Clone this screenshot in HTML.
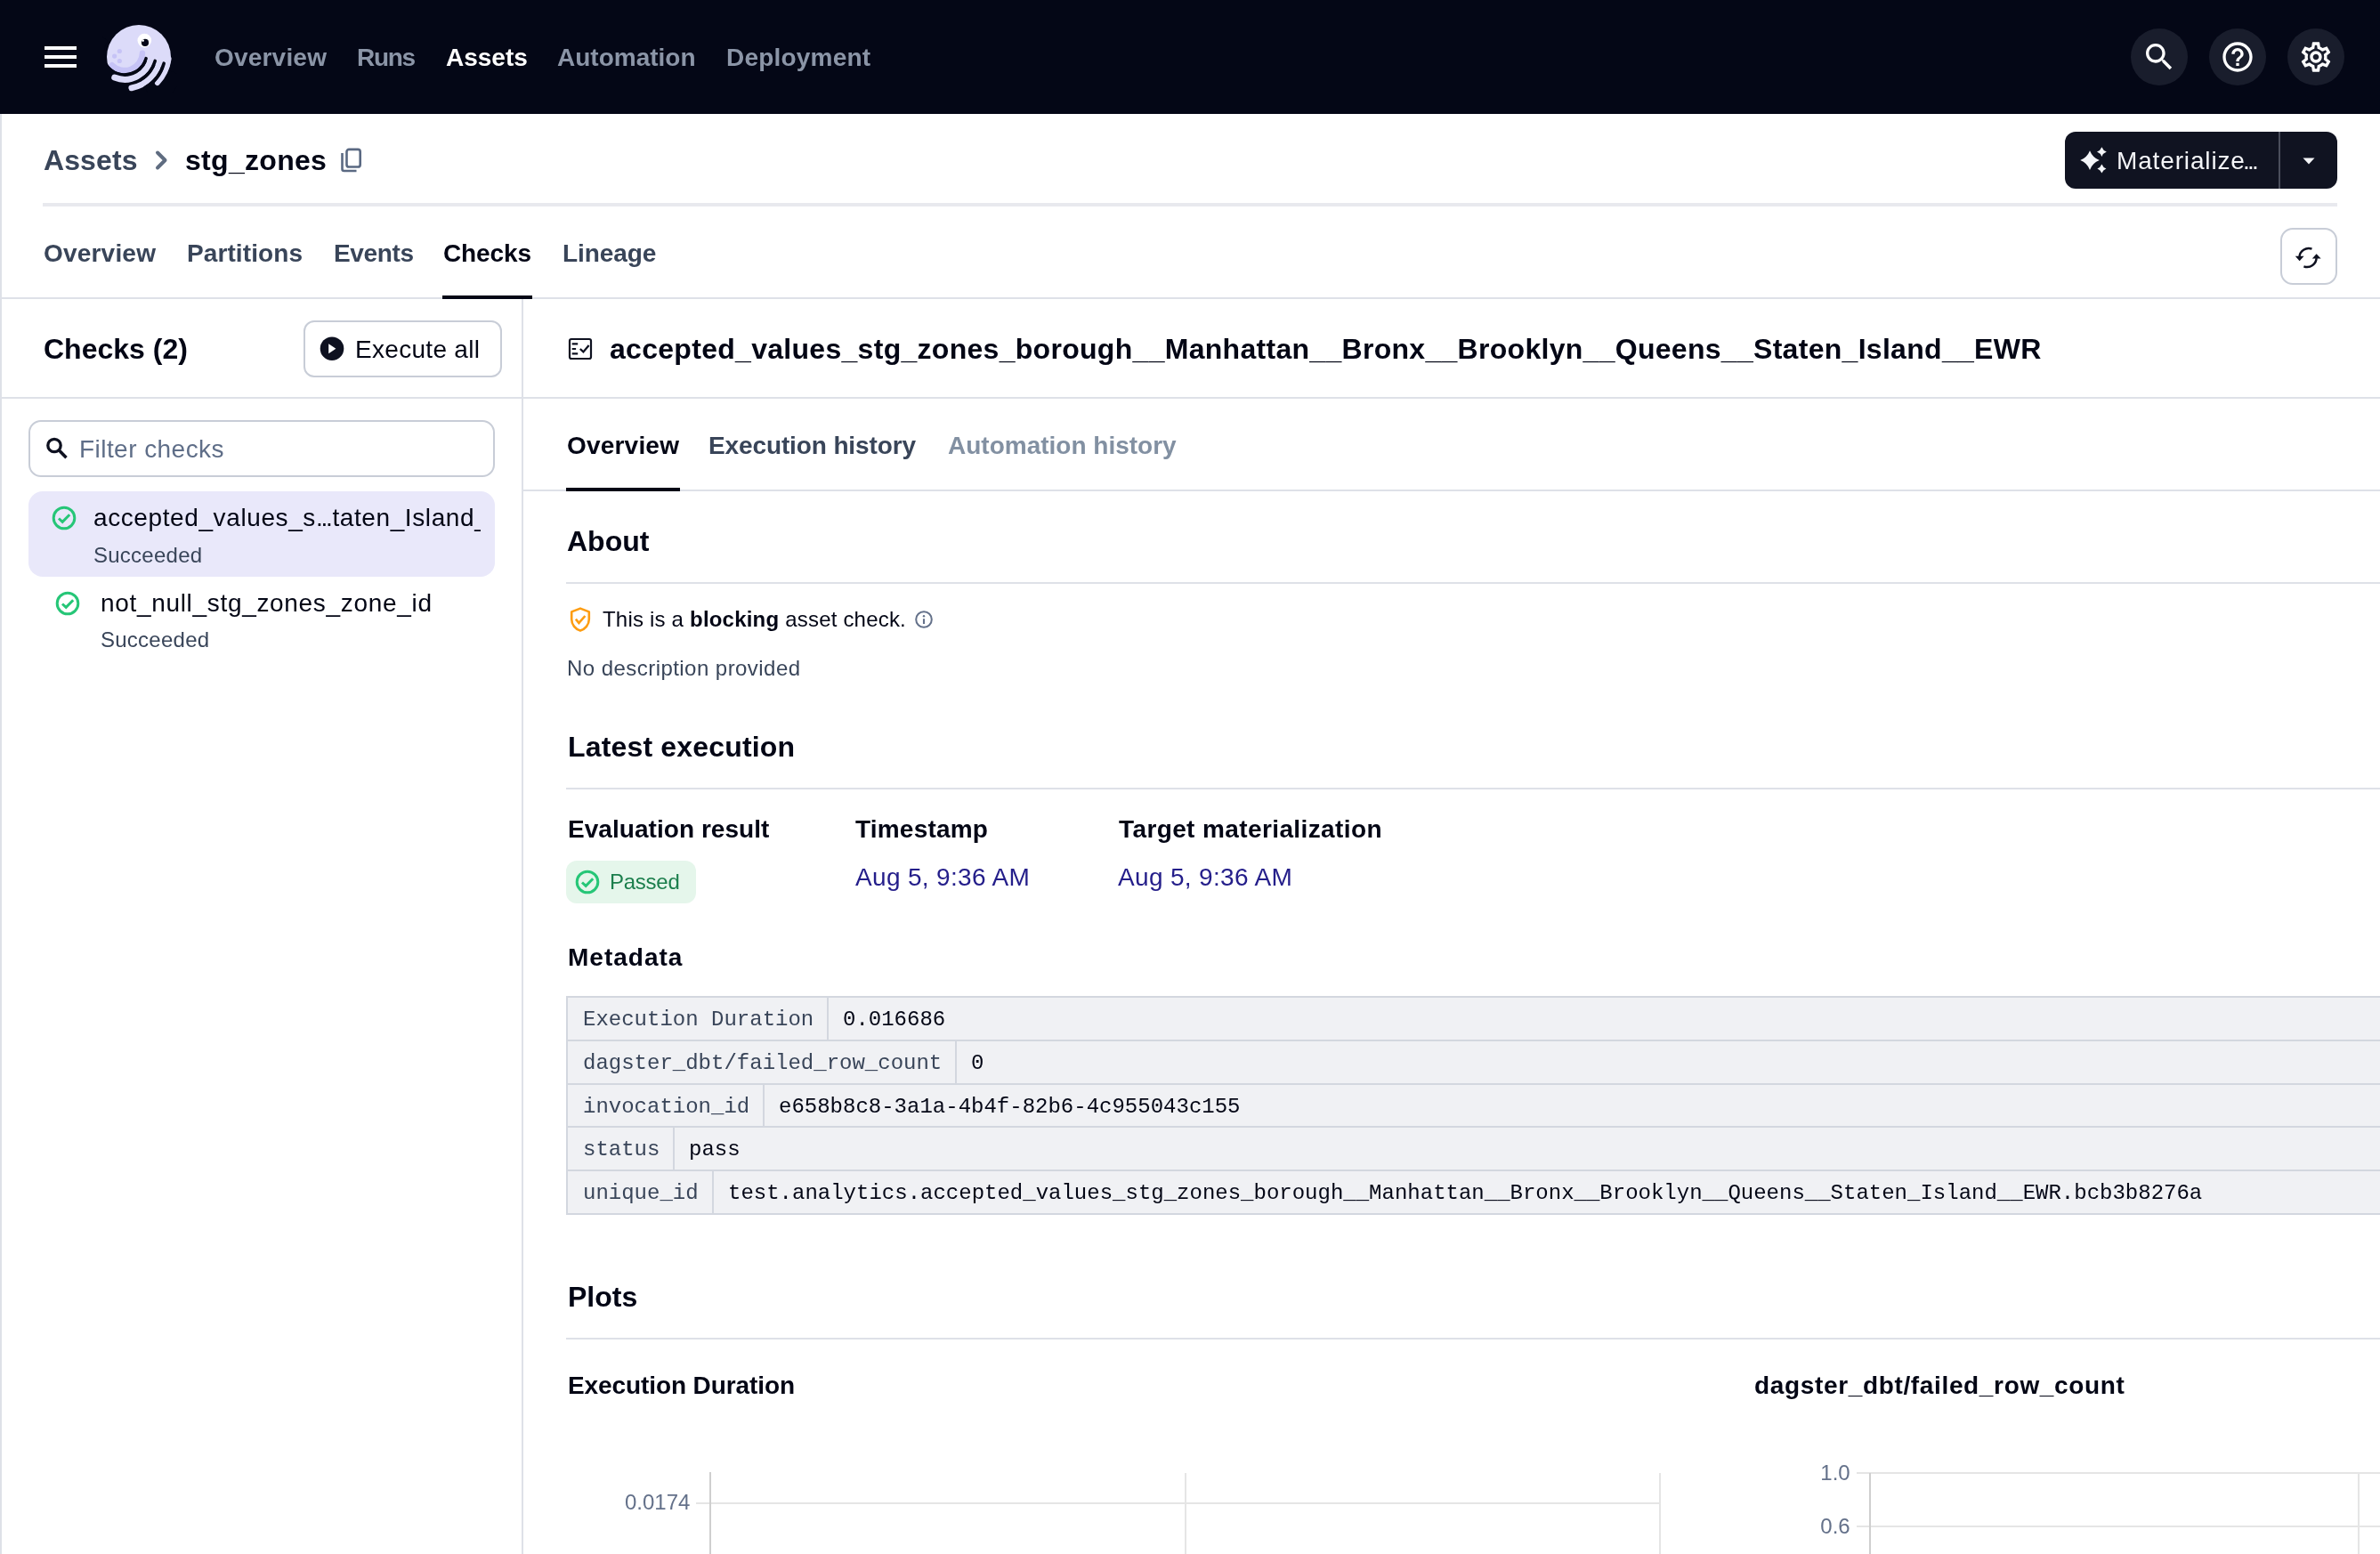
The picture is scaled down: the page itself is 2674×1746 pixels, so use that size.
<!DOCTYPE html>
<html><head><meta charset="utf-8"><title>stg_zones checks</title>
<style>
html,body{margin:0;padding:0;background:#FFFFFF;}
body{width:2674px;height:1746px;position:relative;overflow:hidden;font-family:"Liberation Sans",sans-serif;}
.t{position:absolute;white-space:pre;line-height:1;will-change:transform;}
.r{position:absolute;}
@media (max-width:2000px){html{zoom:0.5;}}
</style></head><body>
<div class="r" style="left:0px;top:0px;width:2674px;height:128px;background:#040716;"></div>
<div class="r" style="left:50px;top:52px;width:36px;height:4px;background:#FFFFFF;"></div>
<div class="r" style="left:50px;top:62px;width:36px;height:4px;background:#FFFFFF;"></div>
<div class="r" style="left:50px;top:72px;width:36px;height:4px;background:#FFFFFF;"></div>
<svg class="r" style="left:115px;top:24px;" width="84" height="80" viewBox="0 0 84 80"><circle cx="41" cy="40" r="36" fill="#DCDBF9"/>
<path d="M46.51 43.69 A23.2 23.2 0 1 1 6.00 21.69 L-32.34 -5.15 A70 70 0 1 0 89.90 61.22 Z" fill="#040716"/>
<path d="M44.99 35.70 A20.0 20.0 0 0 1 10.86 49.14" stroke="#C6C3F6" stroke-width="6.4" fill="none" stroke-linecap="round"/>
<path d="M36.60 55.09 A23.2 23.2 0 0 1 6.00 21.69 L-32.34 -5.15 A70 70 0 0 0 60.00 95.62 Z" fill="#040716"/>
<path d="M54.96 39.21 A30.25 30.25 0 0 1 13.67 63.05" stroke="#DCDBF9" stroke-width="6.9" fill="none" stroke-linecap="round"/>
<path d="M65.25 40.66 A40.65 40.65 0 0 1 32.76 74.90" stroke="#DCDBF9" stroke-width="6.7" fill="none" stroke-linecap="round"/>
<path d="M74.81 42.00 A50.3 50.3 0 0 1 61.79 69.30" stroke="#DCDBF9" stroke-width="5.6" fill="none" stroke-linecap="round"/>
<path d="M49.10 41.64 A25.0 25.0 0 0 1 37.50 56.65" stroke="#040716" stroke-width="3.6" fill="none" stroke-linecap="round"/>
<path d="M59.23 44.43 A35.5 35.5 0 0 1 42.75 65.74" stroke="#040716" stroke-width="3.6" fill="none" stroke-linecap="round"/>
<path d="M69.16 47.16 A45.8 45.8 0 0 1 47.90 74.66" stroke="#040716" stroke-width="3.6" fill="none" stroke-linecap="round"/>
<circle cx="47.3" cy="21.6" r="7.8" fill="#FFFFFF"/>
<circle cx="48" cy="23.9" r="4.1" fill="#040716"/><circle cx="45.6" cy="21.6" r="1.3" fill="#FFFFFF"/>
<circle cx="19.3" cy="33.5" r="2.6" fill="#C6C3F6"/>
<circle cx="13.6" cy="39.1" r="2.6" fill="#C6C3F6"/>
<circle cx="19.3" cy="44.5" r="2.6" fill="#C6C3F6"/>
</svg>
<div class="t" style="left:241px;top:51.30px;font-size:28px;font-weight:700;color:#8B95A7;font-family:'Liberation Sans', sans-serif;letter-spacing:0.2px;">Overview</div>
<div class="t" style="left:401px;top:51.30px;font-size:28px;font-weight:700;color:#8B95A7;font-family:'Liberation Sans', sans-serif;letter-spacing:-1.3px;">Runs</div>
<div class="t" style="left:501px;top:51.30px;font-size:28px;font-weight:700;color:#FFFFFF;font-family:'Liberation Sans', sans-serif;">Assets</div>
<div class="t" style="left:626px;top:51.30px;font-size:28px;font-weight:700;color:#8B95A7;font-family:'Liberation Sans', sans-serif;">Automation</div>
<div class="t" style="left:816px;top:51.30px;font-size:28px;font-weight:700;color:#8B95A7;font-family:'Liberation Sans', sans-serif;letter-spacing:0.2px;">Deployment</div>
<div class="r" style="left:2394px;top:32px;width:64px;height:64px;border-radius:50%;background:#191D2C"></div>
<div class="r" style="left:2482px;top:32px;width:64px;height:64px;border-radius:50%;background:#191D2C"></div>
<div class="r" style="left:2570px;top:32px;width:64px;height:64px;border-radius:50%;background:#191D2C"></div>
<svg class="r" style="left:2406px;top:43.7px;" width="40" height="40" viewBox="0 0 24 24"><path d="M15.5 14h-.79l-.28-.27C15.41 12.59 16 11.11 16 9.5 16 5.91 13.09 3 9.5 3S3 5.91 3 9.5 5.91 16 9.5 16c1.61 0 3.09-.59 4.23-1.57l.27.28v.79l5 4.99L20.49 19l-4.99-5zm-6 0C7.01 14 5 11.99 5 9.5S7.01 5 9.5 5 14 7.01 14 9.5 11.99 14 9.5 14z" fill="#FFFFFF"/></svg>
<svg class="r" style="left:2494px;top:44px;" width="40" height="40" viewBox="0 0 24 24"><path d="M11 18h2v-2h-2v2zm1-16C6.48 2 2 6.480 2 12s4.48 10 10 10 10-4.48 10-10S17.52 2 12 2zm0 18c-4.41 0-8-3.59-8-8s3.59-8 8-8 8 3.59 8 8-3.59 8-8 8zm0-14c-2.21 0-4 1.79-4 4h2c0-1.1.9-2 2-2s2 .9 2 2c0 2-3 1.75-3 5h2c0-2.25 3-2.5 3-5 0-2.21-1.790-4-4-4z" fill="#FFFFFF"/></svg>
<svg class="r" style="left:2582px;top:44px;" width="40" height="40" viewBox="0 0 24 24"><path d="M19.43 12.98c.04-.32.07-.64.07-.98 0-.34-.03-.66-.07-.98l2.11-1.65c.19-.15.24-.42.12-.64l-2-3.46c-.09-.16-.26-.25-.44-.25-.06 0-.12.01-.17.03l-2.49 1c-.52-.4-1.08-.73-1.69-.98l-.38-2.65C14.46 2.18 14.25 2 14 2h-4c-.25 0-.46.18-.49.42l-.38 2.65c-.61.25-1.17.59-1.69.98l-2.49-1c-.06-.02-.12-.03-.18-.03-.17 0-.34.09-.43.25l-2 3.46c-.13.22-.07.49.12.64l2.11 1.650c-.04.32-.07.65-.07.98 0 .33.03.66.07.98l-2.11 1.65c-.19.15-.24.42-.12.64l2 3.46c.09.16.26.25.44.25.06 0 .12-.01.17-.03l2.49-1c.52.4 1.08.73 1.69.98l.38 2.65c.03.24.24.42.49.42h4c.25 0 .46-.18.49-.42l.38-2.65c.61-.25 1.17-.59 1.69-.98l2.49 1c.06.02.12.03.18.03.17 0 .34-.09.43-.25l2-3.46c.12-.22.07-.49-.12-.64l-2.11-1.65zm-1.98-1.71c.04.31.05.52.05.73 0 .21-.02.43-.05.73l-.14 1.13.89.7 1.08.84-.7 1.21-1.27-.51-1.04-.42-.9.68c-.43.32-.84.56-1.25.73l-1.06.43-.16 1.13-.2 1.35h-1.4l-.19-1.35-.16-1.13-1.06-.43c-.43-.18-.83-.41-1.23-.71l-.91-.7-1.06.43-1.27.51-.7-1.21 1.08-.84.89-.7-.14-1.13c-.03-.31-.05-.54-.05-.74s.02-.43.05-.73l.14-1.13-.89-.7-1.08-.84.7-1.21 1.27.51 1.04.42.9-.68c.43-.32.84-.56 1.25-.73l1.06-.43.16-1.13.2-1.35h1.39l.19 1.35.16 1.13 1.06.43c.43.18.83.41 1.23.71l.91.7 1.06-.43 1.27-.51.7 1.21-1.07.85-.89.7.14 1.13zM12 8c-2.21 0-4 1.79-4 4s1.79 4 4 4 4-1.79 4-4-1.79-4-4-4zm0 6c-1.1 0-2-.9-2-2s.9-2 2-2 2 .9 2 2-.9 2-2 2z" fill="#FFFFFF"/></svg>
<div class="r" style="left:0px;top:128px;width:2px;height:1618px;background:#DEE1E8;"></div>
<div class="t" style="left:49px;top:163.91px;font-size:32px;font-weight:700;color:#394559;font-family:'Liberation Sans', sans-serif;letter-spacing:0.1px;">Assets</div>
<svg class="r" style="left:170px;top:166px;" width="22" height="28" viewBox="0 0 22 28"><path d="M7 5.5 L15.5 14 L7 22.5" stroke="#5F6C80" stroke-width="4" fill="none" stroke-linecap="round" stroke-linejoin="round"/></svg>
<div class="t" style="left:208px;top:163.91px;font-size:32px;font-weight:700;color:#030615;font-family:'Liberation Sans', sans-serif;letter-spacing:0.3px;">stg_zones</div>
<svg class="r" style="left:380px;top:163px;" width="30" height="34" viewBox="0 0 30 34"><rect x="9.5" y="4.9" width="15.2" height="19.6" rx="2.6" stroke="#5A6982" stroke-width="2.6" fill="none"/><path d="M4.5 9 V27 a2 2 0 0 0 2 2 H20.5" stroke="#5A6982" stroke-width="2.6" fill="none"/></svg>
<div class="r" style="left:48px;top:228px;width:2578px;height:4px;background:#E8E9EE;"></div>
<div class="r" style="left:2320px;top:148px;width:306px;height:64px;border-radius:12px;background:#101321"></div>
<div class="r" style="left:2560px;top:148px;width:2px;height:64px;background:#4A4E5C;"></div>
<svg class="r" style="left:2330px;top:160px;" width="50" height="40" viewBox="0 0 50 40"><path d="M18 9.3 Q21.024 17.076 28.8 20.1 Q21.024 23.124000000000002 18 30.900000000000002 Q14.975999999999999 23.124000000000002 7.199999999999999 20.1 Q14.975999999999999 17.076 18 9.3Z" fill="#F4F5F8"/><path d="M31.4 5.199999999999999 Q32.912 9.088 36.8 10.6 Q32.912 12.112 31.4 16.0 Q29.887999999999998 12.112 26.0 10.6 Q29.887999999999998 9.088 31.4 5.199999999999999Z" fill="#F4F5F8"/><path d="M31.4 24.4 Q32.8 28.0 36.4 29.4 Q32.8 30.799999999999997 31.4 34.4 Q30.0 30.799999999999997 26.4 29.4 Q30.0 28.0 31.4 24.4Z" fill="#F4F5F8"/></svg>
<div class="t" style="left:2378px;top:166.80px;font-size:28px;font-weight:400;color:#F4F5F8;font-family:'Liberation Sans', sans-serif;letter-spacing:0.85px;">Materializ<span style="letter-spacing:-1.8px">e</span><span style="letter-spacing:-2.8px">..</span>.</div>
<svg class="r" style="left:2584px;top:174px;" width="20" height="12" viewBox="0 0 20 12"><path d="M3.5 3.5 H16.5 L10 10.5 Z" fill="#F4F5F8"/></svg>
<div class="t" style="left:49px;top:270.80px;font-size:28px;font-weight:700;color:#394559;font-family:'Liberation Sans', sans-serif;letter-spacing:0.2px;">Overview</div>
<div class="t" style="left:209.5px;top:270.80px;font-size:28px;font-weight:700;color:#394559;font-family:'Liberation Sans', sans-serif;letter-spacing:0.1px;">Partitions</div>
<div class="t" style="left:374.5px;top:270.80px;font-size:28px;font-weight:700;color:#394559;font-family:'Liberation Sans', sans-serif;letter-spacing:-0.35px;">Events</div>
<div class="t" style="left:498px;top:270.80px;font-size:28px;font-weight:700;color:#030615;font-family:'Liberation Sans', sans-serif;letter-spacing:-0.1px;">Checks</div>
<div class="t" style="left:631.5px;top:270.80px;font-size:28px;font-weight:700;color:#394559;font-family:'Liberation Sans', sans-serif;letter-spacing:-0.1px;">Lineage</div>
<div class="r" style="left:2px;top:334px;width:2672px;height:2px;background:#DEE1E8;"></div>
<div class="r" style="left:497px;top:332px;width:101px;height:4px;background:#030615;"></div>
<div class="r" style="left:2562px;top:256px;width:60px;height:60px;border:2px solid #C8CDD7;border-radius:14px;"></div>
<svg class="r" style="left:2577px;top:273px;" width="40" height="32" viewBox="0 0 40 32"><path d="M20.5 6.7 A 10.5 10.5 0 0 0 6.4 16" stroke="#0E1120" stroke-width="2.4" fill="none"/><path d="M1.8 14.8 H11.6 L6.6 20.2 Z" fill="#0E1120"/><path d="M11.4 26.3 A 10.5 10.5 0 0 0 25.6 16" stroke="#0E1120" stroke-width="2.4" fill="none"/><path d="M20.8 17.6 H30.6 L25.6 12.2 Z" fill="#0E1120"/></svg>
<div class="r" style="left:586px;top:336px;width:2px;height:1410px;background:#DEE1E8;"></div>
<div class="r" style="left:2px;top:446px;width:2672px;height:2px;background:#DEE1E8;"></div>
<div class="t" style="left:49px;top:375.91px;font-size:32px;font-weight:700;color:#030615;font-family:'Liberation Sans', sans-serif;">Checks (2)</div>
<div class="r" style="left:341px;top:360px;width:219px;height:60px;border:2px solid #C8CDD7;border-radius:12px;"></div>
<svg class="r" style="left:356px;top:375px;" width="34" height="34" viewBox="0 0 34 34"><circle cx="17" cy="16.7" r="13.3" fill="#0E1120"/><path d="M13.2 11.2 L21.4 16.7 L13.2 22.2Z" fill="#fff"/></svg>
<div class="t" style="left:398.6px;top:378.50px;font-size:28px;font-weight:400;color:#030615;font-family:'Liberation Sans', sans-serif;letter-spacing:0.3px;">Execute all</div>
<div class="r" style="left:32px;top:472px;width:520px;height:60px;border:2px solid #C8CDD7;border-radius:14px;"></div>
<svg class="r" style="left:46px;top:486px;" width="34" height="34" viewBox="0 0 34 34"><circle cx="15" cy="14.5" r="7.2" stroke="#0E1120" stroke-width="3.3" fill="none"/><path d="M20.2 19.8 L28.5 28.2" stroke="#0E1120" stroke-width="3.6"/></svg>
<div class="t" style="left:88.5px;top:490.50px;font-size:28px;font-weight:400;color:#5F6E88;font-family:'Liberation Sans', sans-serif;letter-spacing:0.45px;">Filter checks</div>
<div class="r" style="left:32px;top:552px;width:524px;height:96px;border-radius:16px;background:#E9E8FA"></div>
<svg class="r" style="left:56px;top:566px;" width="32" height="32" viewBox="0 0 32 32"><circle cx="16" cy="16" r="11.8" stroke="#26C677" stroke-width="3" fill="none"/><path d="M10 16.5 L14.2 20.3 L22.2 12.2" stroke="#26C677" stroke-width="3" fill="none"/></svg>
<div class="r" style="left:105px;top:560px;width:435px;height:48px;overflow:hidden;">
<div class="t" style="left:0px;top:8.30px;font-size:28px;font-weight:400;color:#030615;font-family:'Liberation Sans', sans-serif;letter-spacing:0.6px;">accepted_values_s<span style="letter-spacing:-2.3px">..</span><span style="letter-spacing:-0.3px">.</span>taten_Island__EWR</div>
</div>
<div class="t" style="left:105.2px;top:611.58px;font-size:24px;font-weight:400;color:#394559;font-family:'Liberation Sans', sans-serif;letter-spacing:0.25px;">Succeeded</div>
<svg class="r" style="left:60px;top:662px;" width="32" height="32" viewBox="0 0 32 32"><circle cx="16" cy="16" r="11.8" stroke="#26C677" stroke-width="3" fill="none"/><path d="M10 16.5 L14.2 20.3 L22.2 12.2" stroke="#26C677" stroke-width="3" fill="none"/></svg>
<div class="t" style="left:113.3px;top:664.30px;font-size:28px;font-weight:400;color:#030615;font-family:'Liberation Sans', sans-serif;letter-spacing:0.68px;">not_null_stg_zones_zone_id</div>
<div class="t" style="left:113.3px;top:707.38px;font-size:24px;font-weight:400;color:#394559;font-family:'Liberation Sans', sans-serif;letter-spacing:0.25px;">Succeeded</div>
<svg class="r" style="left:636px;top:376px;" width="32" height="32" viewBox="0 0 32 32"><rect x="4.0" y="5.0" width="24" height="22" rx="2" stroke="#0E1120" stroke-width="2.2" fill="none"/><path d="M6.7 10.4 H13.2 M6.7 16 H11.1 M6.7 21.4 H13.2" stroke="#0E1120" stroke-width="2.2"/><path d="M15.8 16 L19.4 19.4 L25.6 12" stroke="#0E1120" stroke-width="2.3" fill="none"/></svg>
<div class="t" style="left:685px;top:375.81px;font-size:32px;font-weight:700;color:#030615;font-family:'Liberation Sans', sans-serif;letter-spacing:0.29px;">accepted_values_stg_zones_borough__Manhattan__Bronx__Brooklyn__Queens__Staten_Island__EWR</div>
<div class="t" style="left:637px;top:486.60px;font-size:28px;font-weight:700;color:#030615;font-family:'Liberation Sans', sans-serif;letter-spacing:0.2px;">Overview</div>
<div class="t" style="left:795.9px;top:486.60px;font-size:28px;font-weight:700;color:#394559;font-family:'Liberation Sans', sans-serif;letter-spacing:-0.12px;">Execution history</div>
<div class="t" style="left:1065px;top:486.60px;font-size:28px;font-weight:700;color:#8290A2;font-family:'Liberation Sans', sans-serif;">Automation history</div>
<div class="r" style="left:588px;top:550px;width:2086px;height:2px;background:#DEE1E8;"></div>
<div class="r" style="left:636px;top:548px;width:128px;height:4px;background:#030615;"></div>
<div class="t" style="left:637px;top:591.91px;font-size:32px;font-weight:700;color:#030615;font-family:'Liberation Sans', sans-serif;">About</div>
<div class="r" style="left:636px;top:654px;width:2038px;height:2px;background:#DEE1E8;"></div>
<svg class="r" style="left:636px;top:680px;" width="32" height="32" viewBox="0 0 32 32"><path d="M16 3.6 L25.8 7.4 V15.8 C25.8 22 21.5 26.8 16 28.6 C10.5 26.8 6.2 22 6.2 15.8 V7.4 Z" stroke="#FD9D12" stroke-width="2.6" fill="none" stroke-linejoin="round"/><path d="M10.9 15.6 L14.4 19.9 L21.4 12" stroke="#FD9D12" stroke-width="2.6" fill="none"/></svg>
<div class="t" style="left:676.7px;top:684.28px;font-size:24px;color:#030615;letter-spacing:0.2px">This is a <b>blocking</b> asset check.</div>
<svg class="r" style="left:1026px;top:684px;" width="24" height="24" viewBox="0 0 24 24"><circle cx="12" cy="12" r="8.8" stroke="#64718A" stroke-width="2" fill="none"/><path d="M12 11.2 V17" stroke="#64718A" stroke-width="2.1"/><circle cx="12" cy="8.3" r="1.2" fill="#64718A"/></svg>
<div class="t" style="left:637.4px;top:738.58px;font-size:24px;font-weight:400;color:#394559;font-family:'Liberation Sans', sans-serif;letter-spacing:0.45px;">No description provided</div>
<div class="t" style="left:638px;top:822.91px;font-size:32px;font-weight:700;color:#030615;font-family:'Liberation Sans', sans-serif;letter-spacing:0.17px;">Latest execution</div>
<div class="r" style="left:636px;top:885px;width:2038px;height:2px;background:#DEE1E8;"></div>
<div class="t" style="left:637.6px;top:917.80px;font-size:28px;font-weight:700;color:#030615;font-family:'Liberation Sans', sans-serif;letter-spacing:0.05px;">Evaluation result</div>
<div class="t" style="left:961px;top:917.80px;font-size:28px;font-weight:700;color:#030615;font-family:'Liberation Sans', sans-serif;letter-spacing:0.2px;">Timestamp</div>
<div class="t" style="left:1256.5px;top:917.80px;font-size:28px;font-weight:700;color:#030615;font-family:'Liberation Sans', sans-serif;letter-spacing:0.39px;">Target materialization</div>
<div class="r" style="left:636px;top:967px;width:146px;height:48px;border-radius:12px;background:#E5F6EB"></div>
<svg class="r" style="left:644px;top:975px;" width="32" height="32" viewBox="0 0 32 32"><circle cx="16" cy="16" r="11.8" stroke="#26C677" stroke-width="3" fill="none"/><path d="M10 16.5 L14.2 20.3 L22.2 12.2" stroke="#26C677" stroke-width="3" fill="none"/></svg>
<div class="t" style="left:685.4px;top:978.98px;font-size:24px;font-weight:400;color:#1B7E4C;font-family:'Liberation Sans', sans-serif;letter-spacing:-0.25px;">Passed</div>
<div class="t" style="left:961px;top:971.90px;font-size:28px;font-weight:400;color:#241E8A;font-family:'Liberation Sans', sans-serif;letter-spacing:0.33px;">Aug 5, 9:36 AM</div>
<div class="t" style="left:1255.5px;top:971.90px;font-size:28px;font-weight:400;color:#241E8A;font-family:'Liberation Sans', sans-serif;letter-spacing:0.33px;">Aug 5, 9:36 AM</div>
<div class="t" style="left:638px;top:1062.00px;font-size:28px;font-weight:700;color:#030615;font-family:'Liberation Sans', sans-serif;letter-spacing:1.0px;">Metadata</div>
<div class="r" style="left:636px;top:1119px;width:2038px;height:245.75px;background:#F0F1F4;"></div>
<div class="r" style="left:636px;top:1119px;width:2038px;height:2px;background:#D3D7DF;"></div>
<div class="r" style="left:636px;top:1119px;width:2px;height:245.75px;background:#D3D7DF;"></div>
<div class="r" style="left:636px;top:1167.75px;width:2038px;height:2px;background:#D3D7DF;"></div>
<div class="r" style="left:929.2px;top:1121.0px;width:2px;height:46.75px;background:#D3D7DF;"></div>
<div class="t" style="left:654.7px;top:1134.00px;font-size:24px;font-weight:400;color:#394559;font-family:'Liberation Mono', monospace;">Execution Duration</div>
<div class="t" style="left:947.2px;top:1134.00px;font-size:24px;font-weight:400;color:#030615;font-family:'Liberation Mono', monospace;">0.016686</div>
<div class="r" style="left:636px;top:1216.5px;width:2038px;height:2px;background:#D3D7DF;"></div>
<div class="r" style="left:1073.2px;top:1169.75px;width:2px;height:46.75px;background:#D3D7DF;"></div>
<div class="t" style="left:654.7px;top:1182.75px;font-size:24px;font-weight:400;color:#394559;font-family:'Liberation Mono', monospace;">dagster_dbt/failed_row_count</div>
<div class="t" style="left:1091.2px;top:1182.75px;font-size:24px;font-weight:400;color:#030615;font-family:'Liberation Mono', monospace;">0</div>
<div class="r" style="left:636px;top:1265.25px;width:2038px;height:2px;background:#D3D7DF;"></div>
<div class="r" style="left:857.2px;top:1218.5px;width:2px;height:46.75px;background:#D3D7DF;"></div>
<div class="t" style="left:654.7px;top:1231.50px;font-size:24px;font-weight:400;color:#394559;font-family:'Liberation Mono', monospace;">invocation_id</div>
<div class="t" style="left:875.2px;top:1231.50px;font-size:24px;font-weight:400;color:#030615;font-family:'Liberation Mono', monospace;">e658b8c8-3a1a-4b4f-82b6-4c955043c155</div>
<div class="r" style="left:636px;top:1314.0px;width:2038px;height:2px;background:#D3D7DF;"></div>
<div class="r" style="left:756.4px;top:1267.25px;width:2px;height:46.75px;background:#D3D7DF;"></div>
<div class="t" style="left:654.7px;top:1280.25px;font-size:24px;font-weight:400;color:#394559;font-family:'Liberation Mono', monospace;">status</div>
<div class="t" style="left:774.4px;top:1280.25px;font-size:24px;font-weight:400;color:#030615;font-family:'Liberation Mono', monospace;">pass</div>
<div class="r" style="left:636px;top:1362.75px;width:2038px;height:2px;background:#D3D7DF;"></div>
<div class="r" style="left:799.6px;top:1316.0px;width:2px;height:46.75px;background:#D3D7DF;"></div>
<div class="t" style="left:654.7px;top:1329.00px;font-size:24px;font-weight:400;color:#394559;font-family:'Liberation Mono', monospace;">unique_id</div>
<div class="t" style="left:817.6px;top:1329.00px;font-size:24px;font-weight:400;color:#030615;font-family:'Liberation Mono', monospace;">test.analytics.accepted_values_stg_zones_borough__Manhattan__Bronx__Brooklyn__Queens__Staten_Island__EWR.bcb3b8276a</div>
<div class="t" style="left:638px;top:1440.81px;font-size:32px;font-weight:700;color:#030615;font-family:'Liberation Sans', sans-serif;">Plots</div>
<div class="r" style="left:636px;top:1503px;width:2038px;height:2px;background:#DEE1E8;"></div>
<div class="t" style="left:637.6px;top:1543.20px;font-size:28px;font-weight:700;color:#030615;font-family:'Liberation Sans', sans-serif;letter-spacing:-0.1px;">Execution Duration</div>
<div class="t" style="left:1971px;top:1543.30px;font-size:28px;font-weight:700;color:#030615;font-family:'Liberation Sans', sans-serif;letter-spacing:0.65px;">dagster_dbt/failed_row_count</div>
<div class="t" style="left:600px;width:175.4px;text-align:right;top:1675.68px;font-size:24px;color:#64718A">0.0174</div>
<div class="r" style="left:782px;top:1688px;width:1084px;height:2px;background:#E5E5E5;"></div>
<div class="r" style="left:797px;top:1654px;width:2px;height:92px;background:#CFCFCF;"></div>
<div class="r" style="left:1331px;top:1655px;width:2px;height:91px;background:#E5E5E5;"></div>
<div class="r" style="left:1864px;top:1655px;width:2px;height:91px;background:#E5E5E5;"></div>
<div class="t" style="left:1900px;width:178.7px;text-align:right;top:1642.68px;font-size:24px;color:#64718A">1.0</div>
<div class="t" style="left:1900px;width:178.7px;text-align:right;top:1702.68px;font-size:24px;color:#64718A">0.6</div>
<div class="r" style="left:2086px;top:1654px;width:588px;height:2px;background:#E5E5E5;"></div>
<div class="r" style="left:2086px;top:1714px;width:588px;height:2px;background:#E5E5E5;"></div>
<div class="r" style="left:2100px;top:1655px;width:2px;height:91px;background:#CFCFCF;"></div>
<div class="r" style="left:2649px;top:1655px;width:2px;height:91px;background:#E5E5E5;"></div>
</body></html>
